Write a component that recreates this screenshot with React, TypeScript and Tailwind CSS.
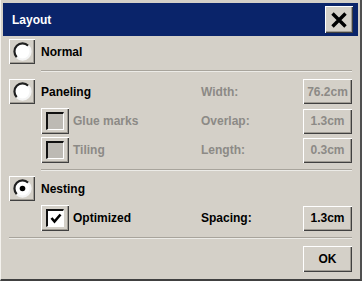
const raised =
  "bg-[#d4d0c8] shadow-[inset_1px_1px_0_#ffffff,inset_-1px_-1px_0_#404040,inset_-2px_-2px_0_#a09c94]";

function Radio({ checked }: { checked?: boolean }) {
  return (
    <div className={`w-[26px] h-[25px] flex items-center justify-center ${raised}`}>
      <svg width="19" height="19" viewBox="0 0 19 19">
        <circle cx="9.5" cy="9.5" r="8" fill="#ffffff" />
        <path d="M15.2 3.8 A8 8 0 0 0 3.8 15.2" fill="none" stroke="#202020" strokeWidth="2.2" />
        <path d="M3.8 15.2 A8 8 0 0 0 15.2 3.8" fill="none" stroke="#f4f4f4" strokeWidth="2.2" />
        {checked && <circle cx="9.5" cy="9.5" r="2.8" fill="#000000" />}
      </svg>
    </div>
  );
}

function Check({ checked, disabled }: { checked?: boolean; disabled?: boolean }) {
  return (
    <div className={`w-[28px] h-[26px] flex items-center justify-center ${raised}`}>
      <div
        className={`w-[18px] h-[18px] border-t-2 border-l-2 border-t-[#101010] border-l-[#101010] border-b border-r border-b-white border-r-white flex items-center justify-center ${
          disabled ? "bg-[#bdbab4]" : "bg-white"
        }`}
      >
        {checked && (
          <svg width="12" height="11" viewBox="0 0 12 11">
            <path d="M1.5 5 L4.5 8.5 L10.5 1.5" fill="none" stroke="#000" strokeWidth="2.6" />
          </svg>
        )}
      </div>
    </div>
  );
}

function ValueBox({ value, disabled }: { value: string; disabled?: boolean }) {
  return (
    <div
      className={`w-[49px] h-[25px] flex items-center justify-center text-[12px] font-bold ${raised} ${
        disabled ? "text-[#8c8a86]" : "text-black"
      }`}
    >
      {value}
    </div>
  );
}

function Row({
  left,
  label,
  value,
  disabled,
  className = "",
}: {
  left: React.ReactNode;
  label?: string;
  value?: string;
  disabled?: boolean;
  className?: string;
}) {
  return (
    <div className={`flex items-center ${className}`}>
      <div className="w-[192px] flex items-center">{left}</div>
      {label && (
        <>
          <div className={`w-[102px] text-[12px] font-bold ${disabled ? "text-[#8c8a86]" : "text-black"}`}>
            {label}
          </div>
          <ValueBox value={value!} disabled={disabled} />
        </>
      )}
    </div>
  );
}

export default function App() {
  return (
    <div
      className="w-[362px] h-[281px] bg-[#d4d0c8] border-l border-l-[#f4f2ee] border-r-2 border-r-[#505050] border-b-2 border-b-[#404040] flex flex-col"
      style={{ fontFamily: '"Liberation Sans", Arial, sans-serif' }}
    >
      {/* Title bar */}
      <div className="mx-[2px] mt-[3px] h-[33px] bg-[#0a246a] flex items-center justify-between pl-[9px] pr-[5px]">
        <span className="text-white text-[12px] font-bold">Layout</span>
        <div className={`w-[28px] h-[27px] flex items-center justify-center ${raised}`}>
          <svg width="18" height="18" viewBox="0 0 18 18">
            <path d="M2.5 2.5 L15.5 15.5 M15.5 2.5 L2.5 15.5" stroke="#000" strokeWidth="3.4" />
          </svg>
        </div>
      </div>

      <div className="flex flex-col pl-[8px] pr-[8px]">
        <Row
          className="mt-[3px]"
          left={
            <>
              <Radio />
              <span className="ml-[6px] text-[12px] font-bold text-black">Normal</span>
            </>
          }
        />
        <div className="ml-[32px] mt-[6px] h-[2px] border-t border-t-[#a8a49c] border-b border-b-[#ecebe7]" />

        <Row
          className="mt-[7px]"
          left={
            <>
              <Radio />
              <span className="ml-[6px] text-[12px] font-bold text-black">Paneling</span>
            </>
          }
          label="Width:"
          value="76.2cm"
          disabled
        />
        <Row
          className="mt-[4px]"
          left={
            <div className="ml-[32px] flex items-center">
              <Check disabled />
              <span className="ml-[4px] text-[12px] font-bold text-[#8c8a86]">Glue marks</span>
            </div>
          }
          label="Overlap:"
          value="1.3cm"
          disabled
        />
        <Row
          className="mt-[3px]"
          left={
            <div className="ml-[32px] flex items-center">
              <Check disabled />
              <span className="ml-[4px] text-[12px] font-bold text-[#8c8a86]">Tiling</span>
            </div>
          }
          label="Length:"
          value="0.3cm"
          disabled
        />
        <div className="ml-[32px] mt-[6px] h-[2px] border-t border-t-[#a8a49c] border-b border-b-[#ecebe7]" />

        <Row
          className="mt-[5px]"
          left={
            <>
              <Radio checked />
              <span className="ml-[6px] text-[12px] font-bold text-black">Nesting</span>
            </>
          }
        />
        <Row
          className="mt-[4px]"
          left={
            <div className="ml-[32px] flex items-center">
              <Check checked />
              <span className="ml-[4px] text-[12px] font-bold text-black">Optimized</span>
            </div>
          }
          label="Spacing:"
          value="1.3cm"
        />
        <div className="mt-[6px] h-[2px] border-t border-t-[#a8a49c] border-b border-b-[#ecebe7]" />

        <div className="mt-[7px] flex justify-end">
          <div className={`w-[49px] h-[26px] flex items-center justify-center text-[12px] font-bold text-black ${raised}`}>
            OK
          </div>
        </div>
      </div>
    </div>
  );
}
